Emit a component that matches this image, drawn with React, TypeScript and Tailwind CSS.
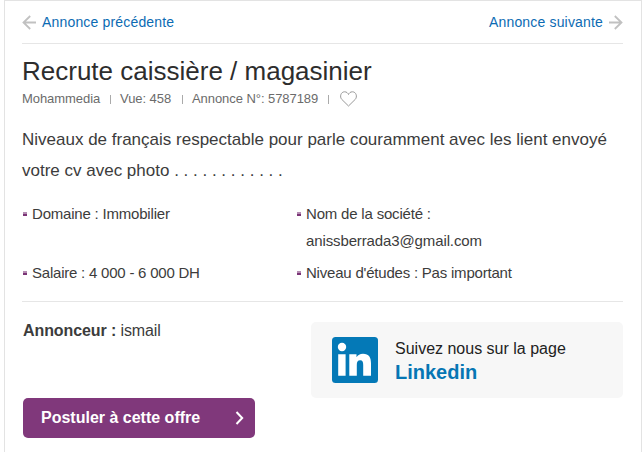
import type { ReactNode } from 'react';

function Arrow({ flip = false }: { flip?: boolean }) {
  return (
    <svg width="15" height="15" viewBox="0 0 15 15" fill="none" stroke="#c1c1c1" strokeWidth="1.8" className={flip ? 'rotate-180' : ''}>
      <path d="M14 7.5H1.5M8.2 1L1.5 7.5L8.2 14" />
    </svg>
  );
}

function Separator() {
  return <span className="h-[9px] w-px bg-[#aaaaaa]" />;
}

function Detail({ children }: { children: ReactNode }) {
  return (
    <li className="flex pl-px text-[15px] leading-[27px] whitespace-nowrap text-[#3c3c3c]">
      <span className="mt-[12px] mr-[5px] h-1 w-1 shrink-0 border-t-2 border-[#b58db3] bg-[#7b3476]" />
      <span>{children}</span>
    </li>
  );
}

export default function App() {
  return (
    <div className="h-[452px] w-[644px] overflow-hidden bg-white font-['Liberation_Sans',Arial,sans-serif]">
      <main className="ml-1 h-[453px] w-[638px] border border-[#e3e3e3] pr-[18px] pl-[17px]">
        <nav className="flex h-[43px] items-center justify-between border-b border-[#e6e6e6] text-[14px] tracking-[0.17px] text-[#0c6bb3]">
          <a className="flex items-center gap-[5px]"><Arrow /><span>Annonce précédente</span></a>
          <a className="flex items-center gap-[5px]"><span>Annonce suivante</span><Arrow flip /></a>
        </nav>
        <h1 className="mt-[11px] h-[33px] text-[26px] leading-[32px] whitespace-nowrap text-[#2d2d2d]">Recrute caissière / magasinier</h1>
        <div className="mt-[2px] flex h-[18px] items-center text-[13px] leading-[18px] tracking-[-0.06px] whitespace-nowrap text-[#6b6b6b]">
          <span className="w-[88px]">Mohammedia</span>
          <Separator />
          <span className="ml-[9px] w-[62px]">Vue: 458</span>
          <Separator />
          <span className="ml-[9px] w-[136px]">Annonce N°: 5787189</span>
          <Separator />
          <svg className="ml-[11px]" width="17" height="16" viewBox="0 0 17 16" fill="none" stroke="#999999" strokeWidth="1">
            <path d="M8.5 15L1.7 8.3C-.5 5.9.7.8 4.6.8C6.6.8 7.8 2 8.5 3.5C9.2 2 10.4.8 12.4.8C16.3.8 17.5 5.9 15.3 8.3Z" />
          </svg>
        </div>
        <p className="mt-[16px] text-[17px] leading-[31px] whitespace-nowrap text-[#3c3c3c]">
          <span>Niveaux de français respectable pour parle couramment avec les lient envoyé</span><br />
          <span>votre cv avec photo . . . . . . . . . . . .</span>
        </p>
        <ul className="mt-[14px] grid h-[102px] w-[601px] grid-cols-[274px_1fr] content-start gap-y-[5px] border-b border-[#e6e6e6]">
          <Detail><span className="tracking-[-0.2px]">Domaine : Immobilier</span></Detail>
          <Detail><span className="tracking-[-0.19px]">Nom de la société :</span><br /><span className="tracking-[-0.12px]">anissberrada3@gmail.com</span></Detail>
          <Detail><span className="tracking-[-0.22px]">Salaire : 4 000 - 6 000 DH</span></Detail>
          <Detail><span className="tracking-[-0.21px]">Niveau d'études : Pas important</span></Detail>
        </ul>
        <section className="flex justify-between pt-5 pl-px">
          <div>
            <p className="h-[76px] text-[16px] leading-[18px] tracking-[-0.1px] text-[#3c3c3c]"><strong>Annonceur : </strong><span>ismail</span></p>
            <button className="flex h-10 w-[232px] items-center justify-between rounded-[5px] bg-[#80387b] pr-[11px] pl-[18px] text-[16px] font-bold text-white">
              <span>Postuler à cette offre</span>
              <svg width="9" height="14" viewBox="0 0 9 14" fill="none" stroke="white" strokeWidth="2"><path d="M1.5 1L7.2 7L1.5 13" /></svg>
            </button>
          </div>
          <aside className="flex h-[76px] w-[312px] rounded-[5px] bg-[#f7f7f7] pl-[21px]">
            <svg className="mt-[15px]" width="46" height="46" viewBox="0 0 46 46">
              <rect width="46" height="46" rx="3.5" fill="#0479b7" />
              <circle cx="10" cy="10" r="4.2" fill="white" />
              <path d="M6.2 17.3H13.6V38.8H6.2ZM17.3 17.3H24.5V20.2C25.8 18.1 28 16.7 31 16.7C37 16.7 39 20.4 39 26.2V38.8H31.2V28C31.2 25 30.6 23.2 28.2 23.2C25.6 23.2 24.8 25.1 24.8 28V38.8H17.3Z" fill="white" />
            </svg>
            <div className="ml-[17px] pt-[15px] whitespace-nowrap">
              <div className="text-[16px] leading-[23px] text-[#222222]">Suivez nous sur la page</div>
              <div className="text-[20px] leading-[25px] font-bold text-[#0676b4]">Linkedin</div>
            </div>
          </aside>
        </section>
      </main>
    </div>
  );
}
